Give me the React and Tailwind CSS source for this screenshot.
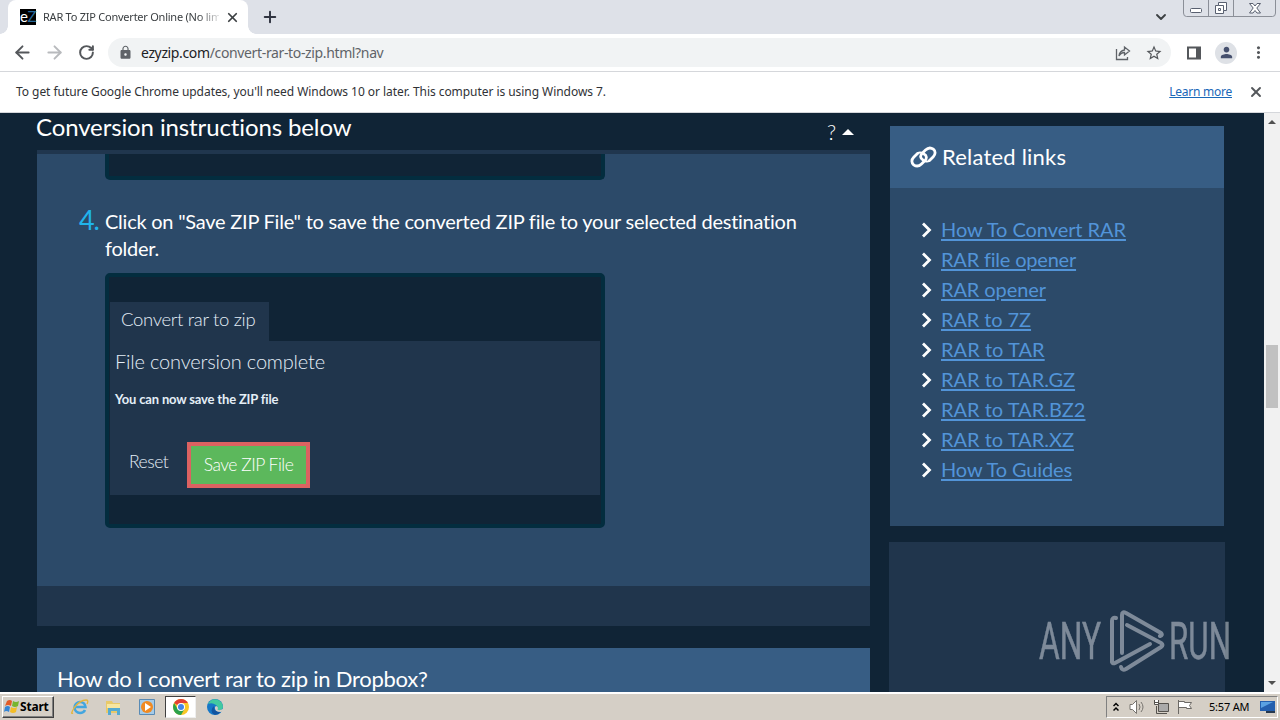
import React from 'react'
import {
  ArrowLeft,
  ArrowRight,
  RotateCw,
  ChevronDown,
  Plus,
  X
} from 'lucide-react'
import { MdLock, MdStarBorder, MdPerson, MdMoreVert } from 'react-icons/md'

const relatedLinks = [
  { label: 'How To Convert RAR', spacing: 'tracking-[-0.060px]' },
  { label: 'RAR file opener', spacing: 'tracking-[-0.200px]' },
  { label: 'RAR opener', spacing: 'tracking-[-0.100px]' },
  { label: 'RAR to 7Z', spacing: 'tracking-[-0.100px]' },
  { label: 'RAR to TAR', spacing: 'tracking-[0.050px]' },
  { label: 'RAR to TAR.GZ', spacing: 'tracking-[0px]' },
  { label: 'RAR to TAR.BZ2', spacing: 'tracking-[0px]' },
  { label: 'RAR to TAR.XZ', spacing: 'tracking-[0px]' },
  { label: 'How To Guides', spacing: 'tracking-[-0.120px]' }
]

const WindowControls = () => (
  <svg className="w-[94px] h-[18px]" viewBox="0 0 94 18" fill="none">
    <path d="M.5 0v13q0 3.500 3 3.500h86q3 0 3-3.500V0M25.500 0v16M50.500 0v16" stroke="#8b8f98" />
    <rect x="7.500" y="8.500" width="11" height="4" rx="1" fill="#fff" stroke="#596070" />
    <path d="M35.500 2.500h8v8h-3v3h-8v-8h3z" fill="#fff" stroke="#596070" />
    <path d="M35.500 5.500h5v5M35.500 8.500h2v2h-2z" stroke="#596070" />
    <path d="M66.500 3.500h3.500l2 2.500 2-2.500h3.500l-3.700 4.500 3.700 5h-3.500l-2-2.500-2 2.500h-3.500l3.700-5z" fill="#fff" stroke="#596070" />
  </svg>
)

const TabStrip = () => (
  <div className="flex h-[34px] bg-[#dee1e8]">
    <div className="relative flex items-center w-[240px] ml-2 pl-3 rounded-t-lg bg-white">
      <div className="absolute -left-2 bottom-0 w-2 h-2 bg-[radial-gradient(circle_at_0_0,#dee1e8_7.500px,#fff_8px)]" />
      <div className="absolute -right-2 bottom-0 w-2 h-2 bg-[radial-gradient(circle_at_100%_0,#dee1e8_7.500px,#fff_8px)]" />
      <div className="flex items-center justify-center w-4 h-4 pb-px bg-black font-[Lato] text-[15px] leading-none tracking-[-0.500px] text-white">
        e<span className="text-[#286a9b]">Z</span>
      </div>
      <div className="w-[176px] ml-[7px] whitespace-nowrap text-[11px] tracking-[-0.240px] text-[#3c4043] [mask-image:linear-gradient(to_right,#000_155px,transparent_180px)]">
        RAR To ZIP Converter Online (No lim
      </div>
      <X className="w-[15px] h-[15px] ml-[6px] shrink-0 text-[#3c4043]" strokeWidth={2.800} />
    </div>
    <Plus className="w-[18px] h-[18px] mt-2 ml-[13px] text-[#303441]" strokeWidth={2.600} />
    <div className="flex ml-auto">
      <ChevronDown className="w-4 h-4 mt-[9px] mr-[14px] text-[#3c4043]" strokeWidth={2.800} />
      <WindowControls />
      <div className="w-[3px]" />
    </div>
  </div>
)

const Toolbar = () => (
  <div className="flex items-center h-[38px] bg-white border-b border-[#d5d7db]">
    <ArrowLeft className="w-[21px] h-[21px] ml-[12px] text-[#54575b]" strokeWidth={2.200} />
    <ArrowRight className="w-[21px] h-[21px] ml-[11px] text-[#b8babd]" strokeWidth={2.200} />
    <RotateCw className="w-[17px] h-[17px] ml-[13px] text-[#54575b]" strokeWidth={2.800} />
    <div className="flex items-center w-[1063px] h-[29px] ml-[13px] pl-2.5 pr-2 rounded-full bg-[#f1f3f4]">
      <MdLock className="w-[15px] h-[15px] text-[#5f6368]" />
      <div className="ml-2 text-[14px] tracking-[-0.360px] text-[#202124]">
        ezyzip.com<span className="text-[#5f6368]">/convert-rar-to-zip.html?nav</span>
      </div>
      <svg className="w-4 h-4 ml-auto" viewBox="0 0 16 16" fill="none" stroke="#5f6368" strokeWidth="1.300">
        <path d="M1.500 4v10.500h11V12M9.500 5V2l5 4-5 4V7.500Q6 7.500 4 11q.5-5 5.500-6z" />
      </svg>
      <MdStarBorder className="w-[18px] h-[18px] ml-[14px] text-[#54575b]" />
    </div>
    <svg className="w-[14px] h-[14px] ml-4" viewBox="0 0 14 14">
      <path d="M1 1.500h12v11H1z" fill="none" stroke="#54575b" strokeWidth="2" />
      <path d="M9 1h5v12H9z" fill="#54575b" />
    </svg>
    <div className="flex items-center justify-center w-[22px] h-[22px] ml-[14px] rounded-full bg-[#dee1e6]">
      <MdPerson className="w-[17px] h-[17px] text-[#46506e]" />
    </div>
    <MdMoreVert className="w-[19px] h-[19px] ml-[12px] text-[#54575b]" />
  </div>
)

const InfoBar = () => (
  <div className="flex items-center h-[41px] pl-4 pr-[16px] bg-white border-b border-[#d5d7db] text-[12px] text-[#303236]">
    <div className="whitespace-nowrap tracking-[-0.053px]">
      To get future Google Chrome updates, you'll need Windows 10 or later. This computer is using Windows 7.
    </div>
    <div className="ml-auto underline tracking-[-0.250px] text-[#1967b8]">Learn more</div>
    <X className="w-[16px] h-[16px] ml-4 text-[#54575b]" strokeWidth={2.800} />
  </div>
)

const ConversionShot = () => (
  <div className="w-[500px] h-[255px] pt-[25px] border-4 border-[#032d3f] rounded-[5px] bg-[#102436] text-[#e4eef7]">
    <div className="w-[159px] h-[39px] ml-px pl-[11px] bg-[#20354c] text-[18.500px] font-light leading-[35px] tracking-[-0.310px] whitespace-nowrap">
      Convert rar to zip
    </div>
    <div className="h-[154px] ml-px pl-[5px] mr-px bg-[#20354c] whitespace-nowrap">
      <div className="text-[20px] font-light leading-[41px] tracking-[-0.190px]">File conversion complete</div>
      <div className="text-[13px] font-bold leading-[35px] tracking-[-0.170px]">You can now save the ZIP file</div>
      <div className="flex mt-[25px] pl-[14px] text-[17.500px] font-light tracking-[-0.500px]">
        <div className="w-[58px] leading-[40px]">Reset</div>
        <div className="w-[123px] h-[46px] border-4 border-[#dc6261] bg-[#5cb85c] text-center leading-[38px] text-white">
          Save ZIP File
        </div>
      </div>
    </div>
  </div>
)

const Instructions = () => (
  <main className="flex flex-col w-[833px] ml-[37px]">
    <div className="flex h-[37px] shrink-0">
      <div className="text-[24px] leading-[28px] -ml-px tracking-[-0.120px]">Conversion instructions below</div>
      <div className="ml-auto mr-[6px] mt-[5px] text-[21px] leading-[28px] font-light">?</div>
      <div className="w-0 h-0 mt-[16px] mr-[16px] border-x-[6px] border-b-[6px] border-x-transparent border-b-white" />
    </div>
    <div className="h-1 shrink-0 bg-[#20364e]" />
    <div className="h-[432px] shrink-0 pl-[68px] bg-[#2c4a69]">
      <div className="w-[500px] h-[26px] border-4 border-t-0 border-[#032d3f] rounded-b-[5px] bg-[#102436]" />
      <div className="relative mt-[28px] mb-[11px] text-[20px] leading-[27px] tracking-[-0.240px]">
        <span className="absolute -left-[26px] -top-[2px] text-[27px] tracking-[-1.200px] text-[#20b4ec]">4.</span>
        Click on "Save ZIP File" to save the converted ZIP file to your selected destination
        <br />
        folder.
      </div>
      <ConversionShot />
    </div>
    <div className="h-10 shrink-0 bg-[#20354c]" />
    <div className="h-[44px] shrink-0 mt-[22px] pl-5 pt-4 bg-[#375d84] text-[22px] leading-[30px] tracking-[-0.260px]">
      How do I convert rar to zip in Dropbox?
    </div>
  </main>
)

const ChainIcon = () => (
  <svg className="w-[27px] h-[22px]" viewBox="0 0 27 22" fill="none" stroke="white" strokeWidth="2.800" strokeLinecap="round">
    <path d="M14 8c3 1.500 3 4.500.8 6.700l-3.300 3.200c-2.300 2.300-5.500 2.600-7.800.9-2.500-2-2.300-5.200 0-7.500L7.500 7.500" />
    <path d="M13 14c-3-1.500-3-4.500-.8-6.700l3.300-3.200c2.300-2.300 5.500-2.600 7.800-.9 2.500 2 2.300 5.200 0 7.500L19.500 14.500" />
    <path d="M7.500 7.500q2-1.700 4-.8M19.500 14.500q-2 1.700-4 .8" strokeWidth="2" />
  </svg>
)

const AnyRunLogo = () => (
  <svg className="absolute right-[48px] bottom-[19px] w-[195px] h-[64px] opacity-55" viewBox="0 0 195 64" fill="none">
    <g fill="#cbd1d9" stroke="#cbd1d9" strokeWidth=".5" fontFamily="Roboto, sans-serif" fontSize="52">
      <text x="2" y="50" textLength="62" lengthAdjust="spacingAndGlyphs">ANY</text>
      <text x="132" y="50" textLength="62" lengthAdjust="spacingAndGlyphs">RUN</text>
    </g>
    <g stroke="#cbd1d9" strokeWidth="4" strokeLinecap="round" strokeLinejoin="round">
      <path d="M79 9q-4-1-4 3v41q1 2 3 1l35-19" />
      <path d="M85 44V6q0-4 4-2l35 20q2 2-1 3" />
      <path d="M90 16l34 18q3 2 0 4L89 60q-4 2-5-2" />
    </g>
  </svg>
)

const Sidebar = () => (
  <aside className="w-[336px] ml-[19px] pt-[13px]">
    <div className="ml-px mr-px">
      <div className="flex items-center h-[62px] pl-5 bg-[#375d84] text-[22px]">
        <ChainIcon />
        <span className="ml-[5px] pb-0.5 tracking-[0.200px]">Related links</span>
      </div>
      <ul className="h-[338px] pl-[31px] pt-[26px] bg-[#2c4a69]">
        {relatedLinks.map((link) => (
          <li key={link.label} className="flex items-center h-[30px]">
            <svg className="w-[12px] h-[16px] mt-0.5 mr-[8px]" viewBox="0 0 12 16" fill="none" stroke="white" strokeWidth="2.800">
              <path d="M2 1.500L8.500 8 2 14.500" />
            </svg>
            <a className={`${link.spacing} whitespace-nowrap text-[20px] leading-[30px] text-[#5294d8] underline decoration-2 underline-offset-[2px]`}>
              {link.label}
            </a>
          </li>
        ))}
      </ul>
    </div>
    <div className="h-[150px] mt-4 bg-[#20354c]" />
  </aside>
)

const Scrollbar = () => (
  <div className="flex flex-col items-center w-4 ml-auto bg-[#f1f1f1]">
    <div className="mt-[7px] border-x-4 border-b-4 border-x-transparent border-b-[#505050]" />
    <div className="w-3 h-[63px] mt-[221px] bg-[#c1c1c1]" />
    <div className="mt-auto mb-[7px] border-x-4 border-t-4 border-x-transparent border-t-[#505050]" />
  </div>
)

const Taskbar = () => (
  <div className="flex items-center h-7 bg-[#d5cfc6] border-t-2 border-white text-[11px] text-black">
    <div className="flex items-center w-[52px] h-[22px] ml-0.5 pl-px border border-t-white border-l-white border-r-[#404040] border-b-[#404040] shadow-[inset_-1px_-1px_#808080] text-[12px] font-bold whitespace-nowrap tracking-[-0.200px]">
      <svg className="w-4 h-4 shrink-0" viewBox="0 0 16 16">
        <path d="M3 2q3-2 5 0L7 7Q4 5 1 7z" fill="#e25b27" />
        <path d="M9 2q3 2 6 0l-1 5q-3 2-6 0z" fill="#78b52e" />
        <path d="M1 8q3-2 5 0l-1 5q-3-2-5 0z" fill="#3585d5" />
        <path d="M7 8q3 2 6 0l-1 5q-3 2-6 0z" fill="#f4bd27" />
      </svg>
      Start
    </div>
    <svg className="w-[18px] h-[18px] ml-[17px]" viewBox="0 0 18 18" fill="none">
      <path d="M14 12q-1.500 3-5 3a5.500 5.500 0 1 1 5.500-6H4.500" stroke="#43a6df" strokeWidth="2.600" />
      <path d="M2 15q-3 2 1-5Q9 2 15 2q3 0 1 4" stroke="#e4b53d" strokeWidth="1.300" />
    </svg>
    <svg className="w-[17px] h-[17px] ml-4" viewBox="0 0 17 17">
      <path d="M1 2h6l1 2h7v10H1z" fill="#e8c969" />
      <path d="M2 5h13v4H2z" fill="#f7e6a0" />
      <path d="M3 9h12v7h-3v-4H6v4H3z" fill="#55aad1" />
    </svg>
    <svg className="w-4 h-4 ml-[17px]" viewBox="0 0 16 16">
      <path d="M.5.5h15v15H.5z" fill="#a5cbe8" stroke="#598bb5" />
      <circle cx="8" cy="8" r="6" fill="#f08a22" />
      <path d="M6 4l6 4-6 4z" fill="#fff" />
    </svg>
    <div className="flex items-center justify-center w-[31px] h-[22px] ml-[10px] bg-white border border-t-[#404040] border-l-[#404040] border-[#eee]">
      <svg className="w-4 h-4" viewBox="0 0 16 16">
        <circle cx="8" cy="8" r="8" fill="#f9c726" />
        <path d="M8 8L1.100 4A8 8 0 0 1 14.900 4H8z" fill="#e24034" />
        <path d="M1.100 4A8 8 0 0 0 8 16l3.500-6L8 8l-3.400 2z" fill="#2ba24c" />
        <circle cx="8" cy="8" r="4" fill="#fff" />
        <circle cx="8" cy="8" r="3" fill="#4285e8" />
      </svg>
    </div>
    <svg className="w-4 h-4 ml-[11px]" viewBox="0 0 16 16">
      <circle cx="8" cy="8" r="8" fill="#1677c7" />
      <path d="M1 5Q4-1 10 .5q6 2 6 7.500-1 4-6 3 2-3-1-5Q5 3 1 5z" fill="#42c9a0" />
      <path d="M7 7q-1 6 7 5.500-3 4-7 3-5-4 0-8.500z" fill="#1254a0" />
      <path d="M9 7q3 1 1.500 3.500Q12 12 16 10v2l-2 1q-7 0-6-5z" fill="#d5cfc6" />
    </svg>
    <div className="flex items-center h-[22px] w-[172px] ml-auto mr-0.5 pl-[6px] border border-t-[#808080] border-l-[#808080] border-white">
      <svg className="w-[6px] h-[10px] shrink-0" viewBox="0 0 6 10" fill="none" stroke="#000" strokeWidth="1.500">
        <path d="M.5 4L3 1.500 5.500 4M.5 8.500L3 6l2.500 2.500" />
      </svg>
      <svg className="w-4 h-4 ml-[10px] shrink-0" viewBox="0 0 16 16" fill="none" stroke="#77746f">
        <path d="M1 5.500h2.500l4-4v13l-4-4H1z" fill="#fff" />
        <path d="M10 5q2 3 0 6M12 3q4 5 0 10" />
      </svg>
      <svg className="w-4 h-4 ml-[8px] shrink-0" viewBox="0 0 16 16" fill="none" stroke="#55524e">
        <path d="M5.500 4.500h10v8h-10z" fill="#aaa" />
        <path d="M7 14.500h7M3.500 7v7.500h4" />
        <path d="M1.500 1v4.500h4V1M1.500 3.500h4" fill="#fff" />
      </svg>
      <svg className="w-4 h-4 ml-[8px] shrink-0" viewBox="0 0 16 16" fill="#fff" stroke="#6c6965">
        <path d="M1.500 2.500h6v1h7l-2 3 2 3h-5v-1h-8" />
        <path d="M1.500 15V1" />
      </svg>
      <div className="ml-[16px] w-[42px] whitespace-nowrap tracking-[-0.200px]">5:57 AM</div>
      <svg className="w-[15px] h-[14px] ml-[9px] shrink-0" viewBox="0 0 15 14">
        <path d="M0 1h15v10H0z" fill="#245fae" />
        <path d="M1 2h12L1 8z" fill="#5aa1e2" />
        <path d="M6 11h9v2H6z" fill="#26384e" />
      </svg>
    </div>
  </div>
)

const App = () => {
  return (
    <div className="w-[1280px] h-[720px] overflow-hidden font-['Noto_Sans',sans-serif]">
      <TabStrip />
      <Toolbar />
      <InfoBar />
      <div className="relative flex h-[579px] overflow-hidden bg-[#102436] font-[Lato,sans-serif] text-white">
        <Instructions />
        <Sidebar />
        <Scrollbar />
        <AnyRunLogo />
      </div>
      <Taskbar />
    </div>
  )
}

export default App
